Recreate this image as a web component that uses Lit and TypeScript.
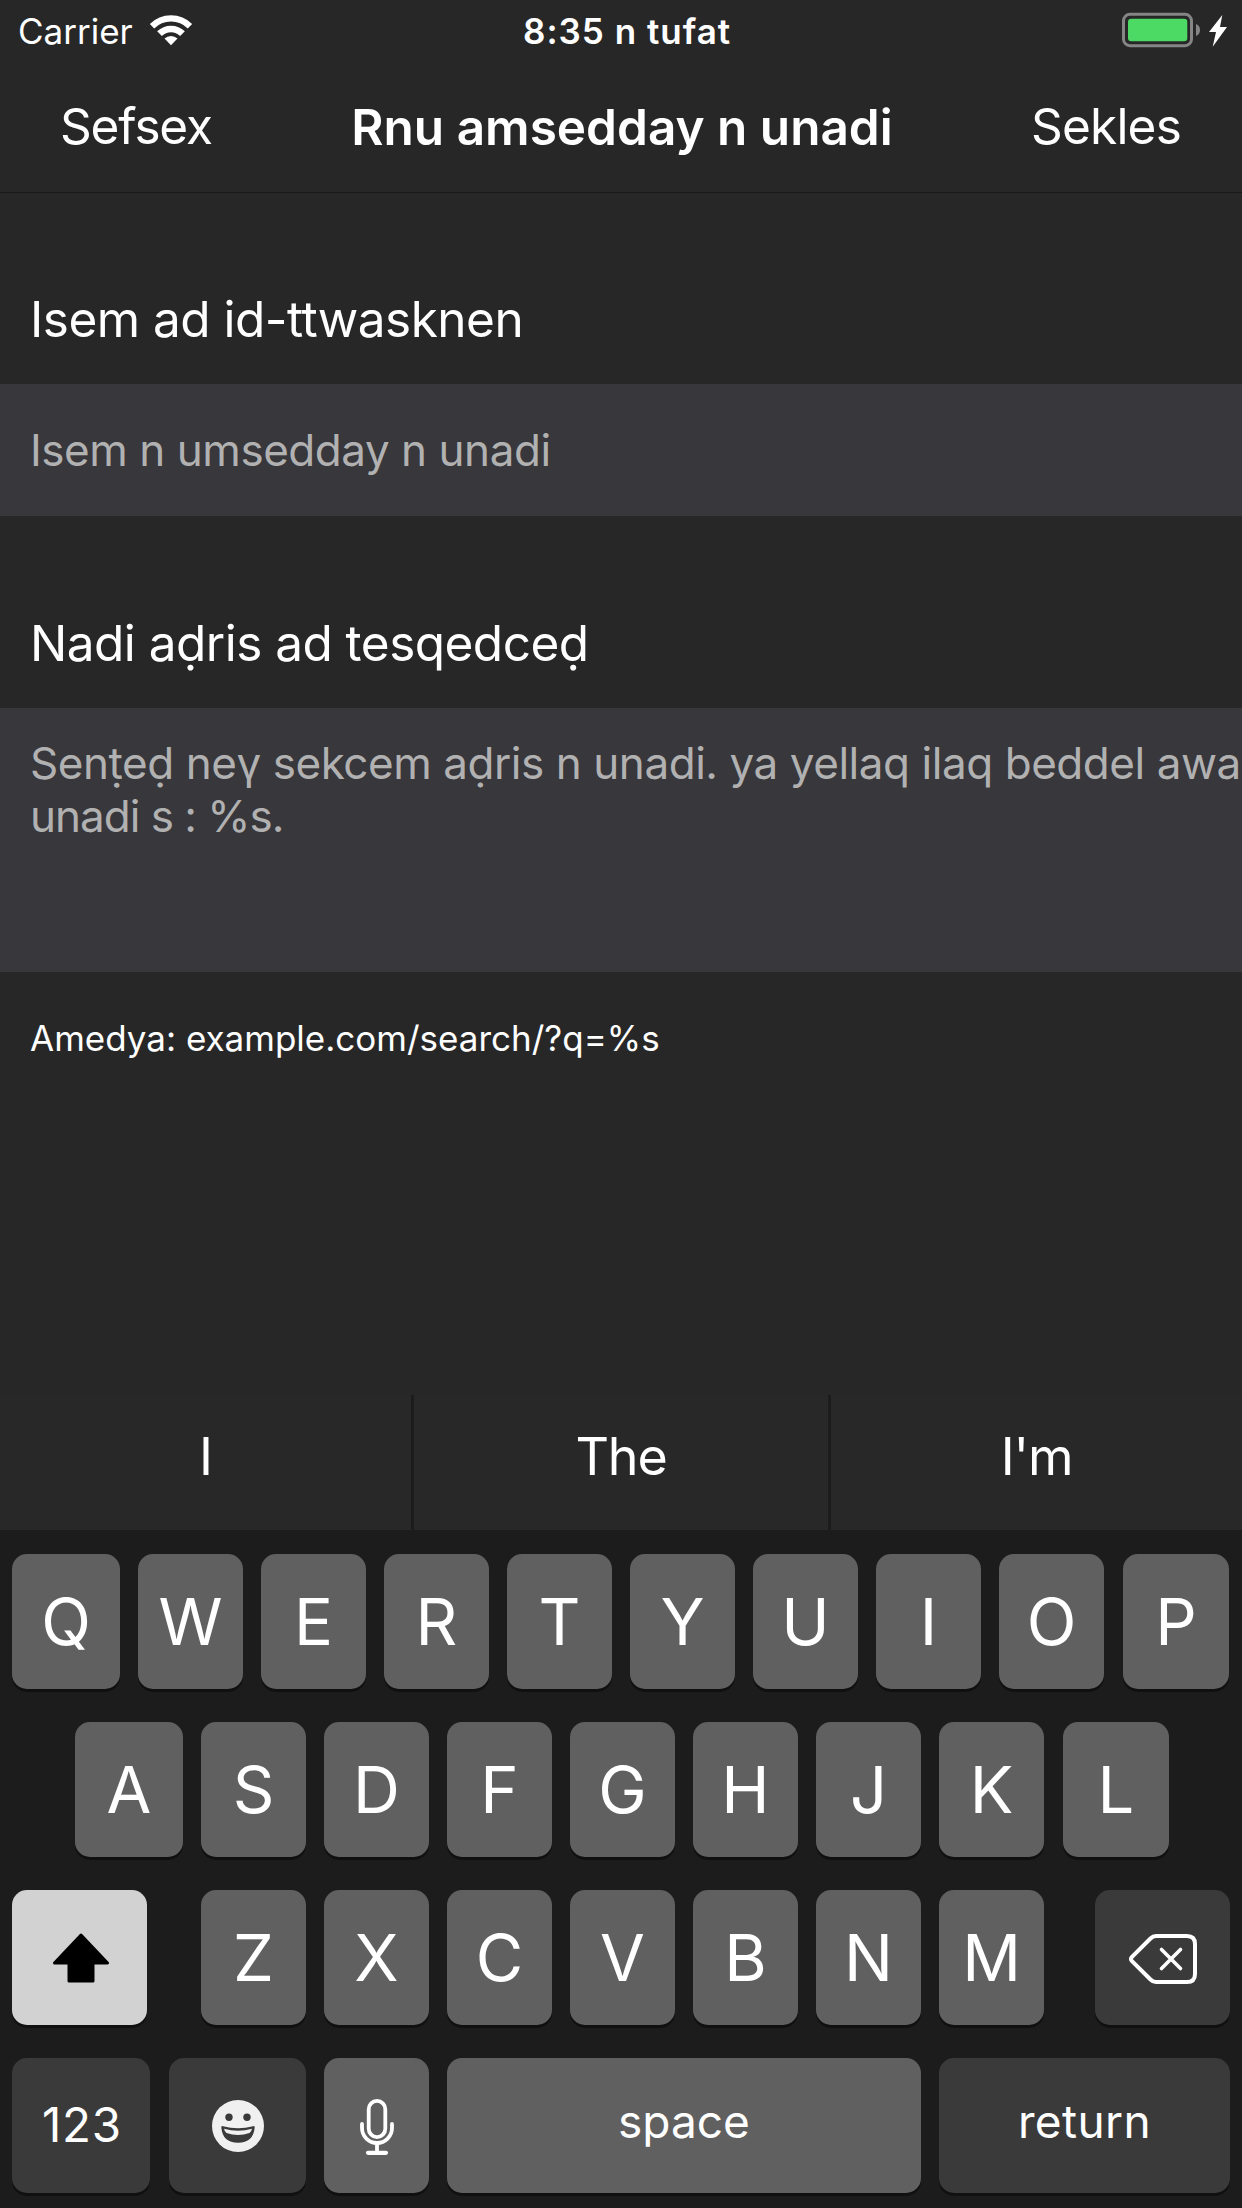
import { LitElement, html, css, TemplateResult } from "lit";
import { customElement, property } from "lit/decorators.js";
import { classMap } from "lit/directives/class-map.js";

const shiftIcon = html`<svg width="58" height="50" viewBox="0 0 58 50">
  <path d="M29 2 L55.500 30 H41 V48 H17 V30 H2.500 Z" fill="#000" stroke="#000" stroke-width="3" stroke-linejoin="round" />
</svg>`;

const deleteIcon = html`<svg width="70" height="52" viewBox="0 0 70 52" fill="none" stroke="#fff" stroke-linecap="round" stroke-linejoin="round">
  <path d="M28 3 H59 Q67 3 67 11 V41 Q67 49 59 49 H28 Q25 49 22.500 46.500 L4 28.200 Q2 26 4 23.800 L22.500 5.500 Q25 3 28 3 Z" stroke-width="4" />
  <path d="M33.500 16.500 L52.500 35.500 M52.500 16.500 L33.500 35.500" stroke-width="3.600" />
</svg>`;

const emojiIcon = html`<svg width="52" height="52" viewBox="0 0 52 52">
  <circle cx="26" cy="26" r="26" fill="#f0f0f0" />
  <circle cx="17" cy="17.300" r="3.700" fill="#3a3a3a" />
  <circle cx="35" cy="17.300" r="3.700" fill="#3a3a3a" />
  <path d="M9.300 27.200 Q9.300 25.800 11 26.200 Q26 30.500 41 26.200 Q42.700 25.800 42.700 27.200 Q41.500 42.700 26 42.700 Q10.500 42.700 9.300 27.200 Z" fill="#3a3a3a" />
  <path d="M12 28.800 Q26 32.500 40 28.800 Q39.500 31.500 37.500 33 Q26 37 14.500 33 Q12.500 31.500 12 28.800 Z" fill="#f0f0f0" />
</svg>`;

const micIcon = html`<svg width="36" height="58" viewBox="0 0 36 58" fill="none" stroke="#fff" stroke-width="3.800" stroke-linecap="round">
  <rect x="9.700" y="2.900" width="16.600" height="36.200" rx="8.300" />
  <path d="M3 26 V30 A15 15 0 0 0 33 30 V26" />
  <path d="M18 45 V54" />
  <path d="M9 54.800 H27" stroke-width="4.200" />
</svg>`;

const wifiIcon = html`<svg width="44" height="31" viewBox="0 0 44 31" fill="none" stroke="#fff">
  <path d="M3.050 11.250 A26.800 26.800 0 0 1 40.950 11.250" stroke-width="6.200" />
  <path d="M10.500 18.700 A16.300 16.300 0 0 1 33.500 18.700" stroke-width="6.600" />
  <path d="M22 30.200 L15.500 23.600 A9.300 9.300 0 0 1 28.500 23.600 Z" fill="#fff" stroke="none" />
</svg>`;

const batteryIcon = html`<svg width="106" height="36" viewBox="0 0 106 36">
  <rect x="1.500" y="2.300" width="68" height="31.400" rx="6.500" fill="none" stroke="#858585" stroke-width="3" />
  <rect x="6" y="6.800" width="59.300" height="22.400" rx="3.200" fill="#4cd964" />
  <path d="M74 12 Q78 13.500 78 18 Q78 22.500 74 24 Z" fill="#858585" />
  <path d="M100.300 3 L87 20 H94 L90.700 34.700 L105 15 H98 Z" fill="#fff" />
</svg>`;

interface Key {
  label: string | TemplateResult;
  kind?: string;
}

const letters = (row: string): Key[] => [...row].map((label) => ({ label }));

const ROWS: { name: string; keys: Key[] }[] = [
  { name: "top", keys: letters("QWERTYUIOP") },
  { name: "home", keys: letters("ASDFGHJKL") },
  {
    name: "bottom",
    keys: [
      { label: shiftIcon, kind: "shift" },
      ...letters("ZXCVBNM"),
      { label: deleteIcon, kind: "delete" },
    ],
  },
  {
    name: "actions",
    keys: [
      { label: "123", kind: "numbers" },
      { label: emojiIcon, kind: "emoji" },
      { label: micIcon, kind: "mic" },
      { label: "space", kind: "space" },
      { label: "return", kind: "return" },
    ],
  },
];

@customElement("soft-keyboard")
export class SoftKeyboard extends LitElement {
  @property({ attribute: false }) suggestions: string[] = [];

  static styles = css`
    :host {
      display: block;
      color: #fff;
    }
    .suggestions {
      display: grid;
      grid-template-columns: 411px 3px 414px 3px 1fr;
      height: 135px;
      background: #282828;
    }
    .suggestion {
      display: flex;
      align-items: center;
      justify-content: center;
      padding-bottom: 12px;
      font-size: 52px;
      letter-spacing: -1.2px;
    }
    .divider {
      background: #1c1c1c;
    }
    .keys {
      display: flex;
      flex-direction: column;
      gap: 33px;
      box-sizing: border-box;
      height: 678px;
      padding-top: 24px;
      background: #1c1c1c;
    }
    .row {
      display: flex;
      gap: 18px;
      padding: 0 12px;
    }
    .home {
      padding: 0 75px;
    }
    .key {
      display: flex;
      flex: none;
      align-items: center;
      justify-content: center;
      width: 105px;
      height: 135px;
      border-radius: 15px;
      background: #606060;
      box-shadow: 0 3px 0 #101010;
      font-size: 65px;
    }
    .top .key:first-child,
    .home .key:first-child {
      width: 108px;
    }
    .top .key:last-child,
    .home .key:last-child {
      width: 106px;
      margin-left: 1px;
    }
    .key.shift {
      width: 135px;
      margin-right: 36px;
      background: #d2d2d2;
    }
    .key.shift svg {
      padding-left: 3px;
    }
    .key.delete {
      width: 135px;
      margin-left: 33px;
      background: #3a3a3a;
    }
    .key.delete svg {
      padding-top: 2px;
    }
    .key.numbers {
      box-sizing: border-box;
      width: 138px;
      padding: 0 0 2px 2px;
      background: #3a3a3a;
      font-size: 47.5px;
      letter-spacing: 0.8px;
    }
    .key.emoji {
      width: 137px;
      margin-left: 1px;
      background: #3a3a3a;
    }
    .key.mic svg {
      padding-top: 2px;
      padding-left: 1px;
    }
    .key.space,
    .key.return {
      box-sizing: border-box;
      padding-bottom: 10px;
      font-size: 46px;
    }
    .key.space {
      width: 474px;
    }
    .key.return {
      width: 291px;
      background: #3a3a3a;
      letter-spacing: 0.4px;
    }
  `;

  render() {
    return html`
      <div class="suggestions">
        ${this.suggestions.map(
          (word, i) => html`${i ? html`<div class="divider"></div>` : ""}
            <div class="suggestion">${word}</div>`
        )}
      </div>
      <div class="keys">
        ${ROWS.map(
          (row) => html`<div class="row ${row.name}">
            ${row.keys.map(
              (key) => html`<div class=${classMap({ key: true, [key.kind ?? "letter"]: true })}>${key.label}</div>`
            )}
          </div>`
        )}
      </div>
    `;
  }
}

@customElement("app-root")
export class AppRoot extends LitElement {
  static styles = css`
    :host {
      display: flex;
      flex-direction: column;
      width: 1242px;
      height: 2208px;
      overflow: hidden;
      background: #272727;
      color: #fff;
      font-family: Inter, "Liberation Sans", sans-serif;
    }
    .status {
      display: grid;
      grid-template-columns: 523px auto 1fr;
      align-items: center;
      box-sizing: border-box;
      height: 60px;
      padding-top: 2px;
      font-size: 35px;
    }
    .carrier {
      display: flex;
      align-items: center;
      gap: 16px;
      padding-left: 18px;
    }
    .carrier svg {
      margin-bottom: 2px;
    }
    .time {
      font-weight: 600;
      letter-spacing: 1px;
    }
    .battery {
      display: flex;
      justify-content: flex-end;
      padding-right: 14px;
      margin-bottom: 2px;
    }
    .nav {
      display: grid;
      grid-template-columns: 1fr auto 1fr;
      align-items: center;
      box-sizing: border-box;
      height: 133px;
      padding: 0 61px 0 60px;
      border-bottom: 1px solid #191919;
      font-size: 49.5px;
    }
    .cancel {
      letter-spacing: -1.15px;
    }
    .title {
      padding: 2px 0 0 3px;
      font-weight: 600;
    }
    .save {
      letter-spacing: -0.8px;
      text-align: right;
    }
    .label {
      display: flex;
      align-items: flex-end;
      box-sizing: border-box;
      height: 192px;
      padding: 0 30px 35px;
      font-size: 49.5px;
      line-height: 60px;
      letter-spacing: -0.52px;
    }
    .label.first {
      height: 191px;
    }
    .field {
      box-sizing: border-box;
      height: 132px;
      padding-left: 30px;
      background: #38373c;
      color: #b1b1b1;
      font-size: 44px;
      line-height: 132px;
      letter-spacing: -0.46px;
      white-space: nowrap;
    }
    .field.area {
      height: 264px;
      padding-top: 29px;
      line-height: 53px;
      letter-spacing: -0.445px;
    }
    .tail {
      letter-spacing: -1px;
    }
    .hint {
      flex: 1;
      padding: 44px 30px 0;
      font-size: 35px;
      line-height: 44px;
    }
  `;

  render() {
    return html`
      <div class="status">
        <div class="carrier"><span>Carrier</span>${wifiIcon}</div>
        <div class="time">8:35 n tufat</div>
        <div class="battery">${batteryIcon}</div>
      </div>
      <div class="nav">
        <div class="cancel">Sefsex</div>
        <div class="title">Rnu amsedday n unadi</div>
        <div class="save">Sekles</div>
      </div>
      <div class="label first">Isem ad id-ttwasknen</div>
      <div class="field">Isem n umsedday n unadi</div>
      <div class="label">Nadi aḍris ad tesqedceḍ</div>
      <div class="field area">
        <div>Senṭeḍ neγ sekcem aḍris n unadi. ya yellaq ilaq beddel awa</div>
        <div class="tail">unadi s : %s.</div>
      </div>
      <div class="hint">Amedya: example.com/search/?q=%s</div>
      <soft-keyboard .suggestions=${["I", "The", "I'm"]}></soft-keyboard>
    `;
  }
}
